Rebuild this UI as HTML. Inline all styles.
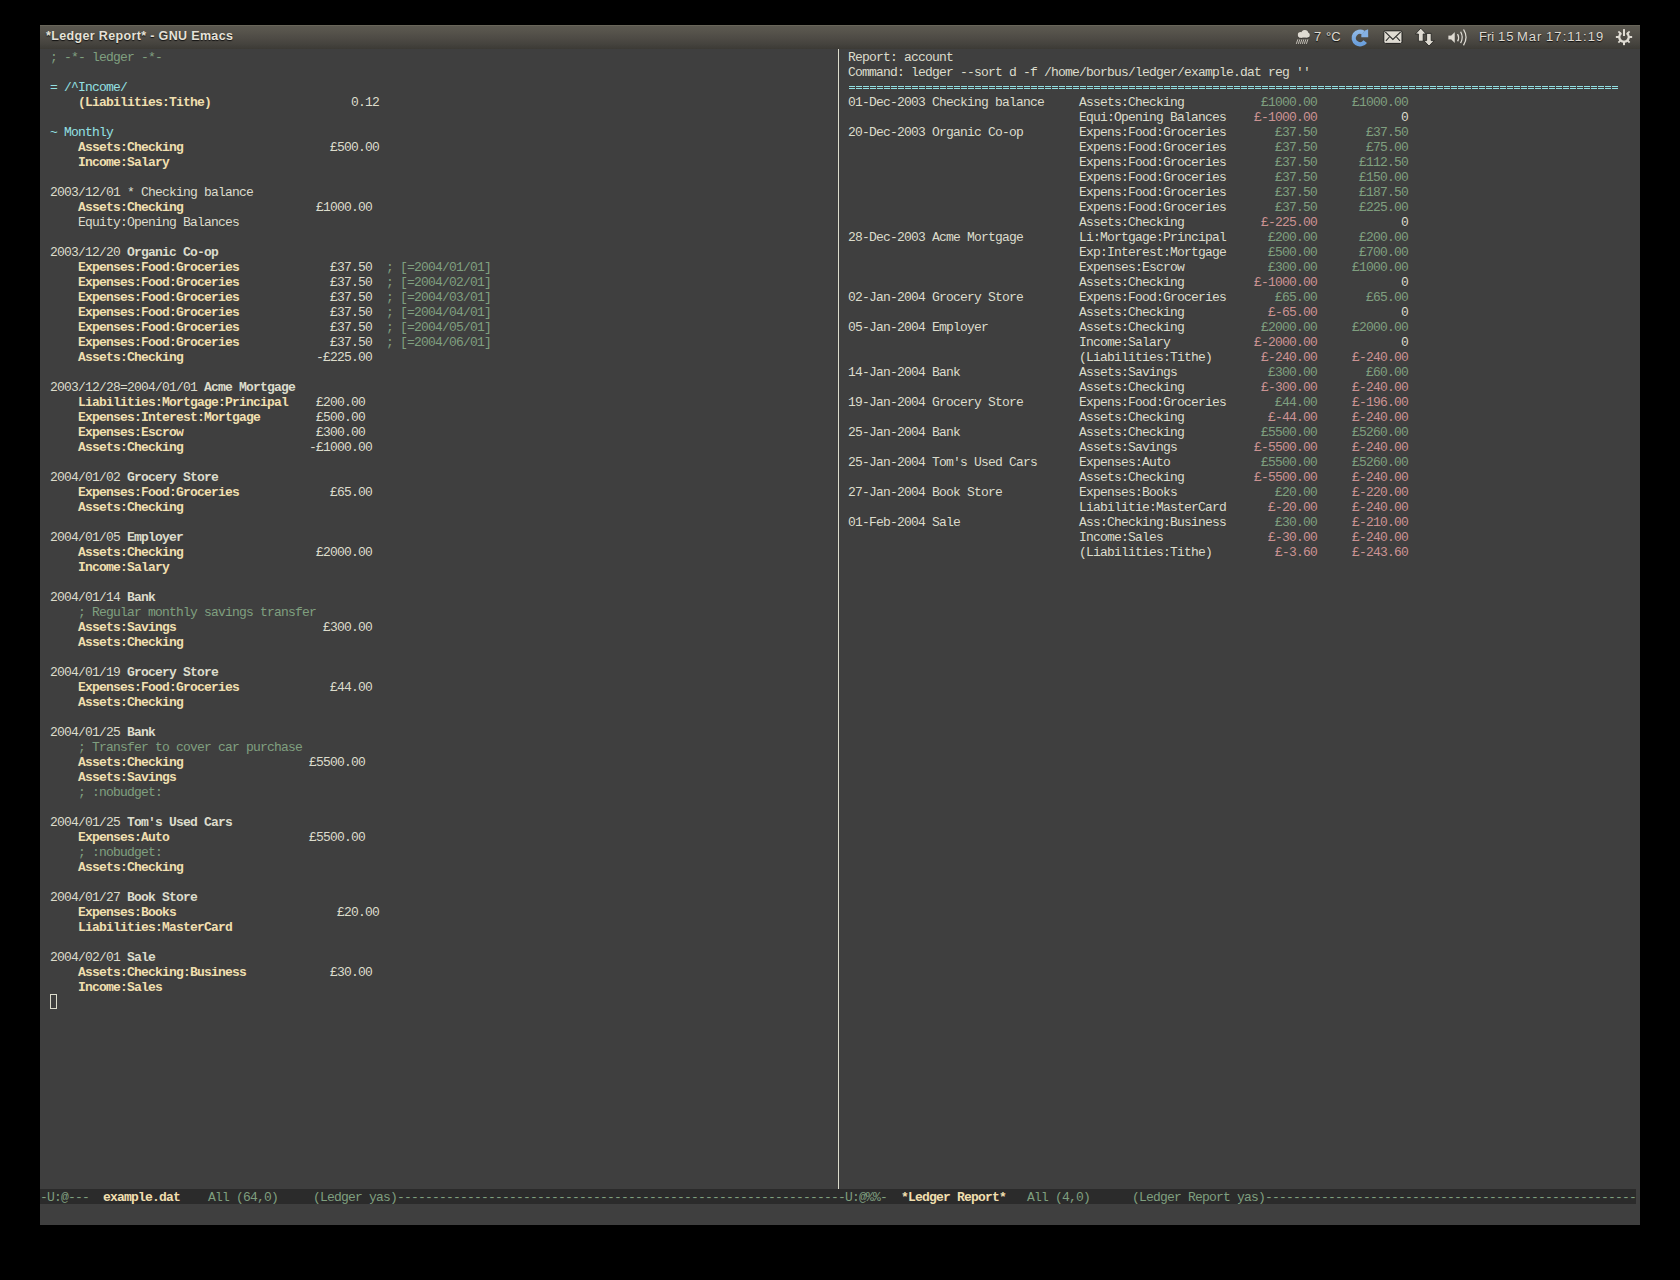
<!DOCTYPE html>
<html><head><meta charset="utf-8">
<style>
html,body{margin:0;padding:0;background:#000;width:1680px;height:1280px;overflow:hidden;}
#win{position:absolute;left:40px;top:25px;width:1600px;height:1200px;background:#3f3f3f;overflow:hidden;}
#title{position:absolute;left:40px;top:25px;width:1600px;height:24px;background:linear-gradient(#69665a 0px,#69665a 1px,#5b5850 1px,#57544c 6px,#4e4b45 13px,#45433e 19px,#3c3a35 24px);}
#title .t{position:absolute;left:6px;top:4px;font:bold 12.5px "Liberation Sans",sans-serif;letter-spacing:0.35px;color:#e6e2d8;text-shadow:0 1px 1px #111;white-space:pre;}
#title .st{position:absolute;top:4px;font:13px "Liberation Sans",sans-serif;color:#dfdbd2;text-shadow:0 1px 1px #111;white-space:pre;}
#txt span{position:absolute;white-space:pre;font-family:"Liberation Mono",monospace;font-size:13px;letter-spacing:-0.8px;line-height:15px;height:15px;}
.f{color:#dcdccc}
.c{color:#7f9f7f}
.y{color:#93e0e3}
.a{color:#f0dfaf;font-weight:bold}
.p{color:#dcdccc;font-weight:bold}
.g{color:#7f9f7f}
.r{color:#cc9393}
.eq{color:#93e0e3}
.mg{color:#7f9f7f}
.mb{color:#f0dfaf;font-weight:bold}
#sep{position:absolute;left:838px;top:49px;width:1px;height:1140px;background:#dcdccc;}
#ml{position:absolute;left:40px;top:1189px;width:1596px;height:15px;background:#2b2b2b;}
#cursor{position:absolute;left:50px;top:994px;width:7px;height:15px;border:1px solid #dcdccc;box-sizing:border-box;}
svg{position:absolute;overflow:visible}
#eqline{position:absolute;left:849px;top:86px;width:770px;height:3px;background:repeating-linear-gradient(90deg,#93e0e3 0px,#93e0e3 6px,transparent 6px,transparent 7px);-webkit-mask:linear-gradient(#000 0 1px,transparent 1px 2px,#000 2px 3px);mask:linear-gradient(#000 0 1px,transparent 1px 2px,#000 2px 3px);}
</style></head><body>
<div id="win"></div>
<div id="sep"></div>
<div id="ml"></div>
<div id="cursor"></div>
<div id="eqline"></div>
<div id="title"><span class="t">*Ledger Report* - GNU Emacs</span>
<span class="st" style="left:1274px">7</span>
<span class="st" style="left:1286px">°C</span>
<span class="st" style="left:1439px">Fri</span><span class="st" style="left:1458px;letter-spacing:1px">15</span><span class="st" style="left:1477px;letter-spacing:1px">Mar</span><span class="st" style="left:1506px;letter-spacing:1.1px">17:11:19</span>
</div>
<!-- cloud -->
<svg style="left:1294px;top:28px" width="18" height="18" viewBox="0 0 18 18">
<g fill="#1f1f1d" opacity="0.55" transform="translate(0 0.6)"><circle cx="6.6" cy="6.9" r="2.9"/><circle cx="10.8" cy="5.6" r="3.6"/><circle cx="13.3" cy="7.1" r="2.6"/><rect x="6.6" y="6.5" width="6.7" height="3.2"/></g>
<g fill="#dfdbd2"><circle cx="6.6" cy="6.9" r="2.8"/><circle cx="10.8" cy="5.6" r="3.5"/><circle cx="13.3" cy="7.1" r="2.5"/><rect x="6.6" y="6.5" width="6.7" height="3.1"/></g>
<g stroke="#cfcbc2" stroke-width="0.9">
<path d="M2.3 15.9 L3.9 11.3 M4.3 15.9 L5.9 11.3 M6.3 15.9 L7.9 11.3 M8.3 15.9 L9.9 11.3 M10.3 15.9 L11.9 11.3 M12.3 15.9 L13.9 11.3"/>
</g>
</svg>
<!-- refresh -->
<svg style="left:1350px;top:27px" width="22" height="22" viewBox="0 0 22 22">
<defs><linearGradient id="bl" x1="0" y1="0" x2="0" y2="1"><stop offset="0" stop-color="#8fb8e6"/><stop offset="1" stop-color="#6a9fdc"/></linearGradient></defs>
<path d="M13.4 5.6 A6.3 6.3 0 1 0 15.2 14.6" fill="none" stroke="url(#bl)" stroke-width="4.4"/>
<path d="M11.3 7.8 L15 3.6 L18.1 2.2 L18.2 10.2 L11.3 10.2 Z" fill="#84b0e3"/>
</svg>
<!-- mail -->
<svg style="left:1383px;top:30px" width="21" height="15" viewBox="0 0 21 15">
<rect x="0.8" y="0.8" width="18.2" height="12.6" rx="1.5" fill="#dfdbd2" stroke="#1e1e1c" stroke-width="1"/>
<path d="M2.2 1.9 L9.9 9.4 L17.7 1.9 M2.9 10.9 L6.4 7 M17 10.9 L13.5 7" fill="none" stroke="#2a2a28" stroke-width="1.1"/>
</svg>
<!-- network -->
<svg style="left:1414px;top:27px" width="22" height="20" viewBox="0 0 22 20">
<path d="M6.8 1.2 L12.2 7 L9.2 7 L9.2 14.2 L4.4 14.2 L4.4 7 L1.4 7 Z" fill="#dfdbd2" stroke="#1e1e1c" stroke-width="0.8"/>
<path d="M12.6 6.4 L17.2 6.4 L17.2 13.6 L20.2 13.6 L15 19 L9.8 13.6 L12.6 13.6 Z" fill="#dfdbd2" stroke="#1e1e1c" stroke-width="0.8"/>
</svg>
<!-- volume -->
<svg style="left:1446px;top:27px;filter:drop-shadow(0 0 0.7px #151513)" width="24" height="20" viewBox="0 0 24 20">
<path d="M2.3 8.4 L5.2 8.4 L8.8 4.9 L8.8 16.1 L5.2 12.6 L2.3 12.6 Z" fill="#dfdbd2"/>
<path d="M11.6 7 Q13.6 10.6 11.6 14.3" fill="none" stroke="#dfdbd2" stroke-width="1.4"/>
<path d="M14.6 4.6 Q17.9 10.4 14.6 16.1" fill="none" stroke="#dfdbd2" stroke-width="1.4"/>
<path d="M17.5 2.3 Q22.6 10.4 17.5 18.3" fill="none" stroke="#dfdbd2" stroke-width="1.4"/>
</svg>
<!-- power gear -->
<svg style="left:1614px;top:27px;filter:drop-shadow(0 0 0.7px #151513)" width="20" height="20" viewBox="0 0 20 20">
<g transform="translate(10 10)" fill="#dfdbd2">
<path d="M2.6 -4 A4.75 4.75 0 1 1 -2.6 -4" fill="none" stroke="#dfdbd2" stroke-width="2.4"/>
<rect x="-1" y="-7.9" width="2" height="6.9"/>
<g><rect x="-1" y="4.8" width="2" height="3.4"/></g>
<g transform="rotate(45)"><rect x="-1" y="4.8" width="2" height="3.2"/></g>
<g transform="rotate(90)"><rect x="-1" y="4.8" width="2" height="3.4"/></g>
<g transform="rotate(135)"><rect x="-1" y="4.8" width="2" height="3.2"/></g>
<g transform="rotate(-45)"><rect x="-1" y="4.8" width="2" height="3.2"/></g>
<g transform="rotate(-90)"><rect x="-1" y="4.8" width="2" height="3.4"/></g>
<g transform="rotate(-135)"><rect x="-1" y="4.8" width="2" height="3.2"/></g>
</g>
</svg>
<div id="txt">
<span class="c" style="left:50px;top:50px">; -*- ledger -*-</span>
<span class="y" style="left:50px;top:80px">= /^Income/</span>
<span class="a" style="left:78px;top:95px">(Liabilities:Tithe)</span>
<span class="f" style="left:351px;top:95px">0.12</span>
<span class="y" style="left:50px;top:125px">~ Monthly</span>
<span class="a" style="left:78px;top:140px">Assets:Checking</span>
<span class="f" style="left:330px;top:140px">£500.00</span>
<span class="a" style="left:78px;top:155px">Income:Salary</span>
<span class="f" style="left:50px;top:185px">2003/12/01 * Checking balance</span>
<span class="a" style="left:78px;top:200px">Assets:Checking</span>
<span class="f" style="left:316px;top:200px">£1000.00</span>
<span class="f" style="left:78px;top:215px">Equity:Opening Balances</span>
<span class="f" style="left:50px;top:245px">2003/12/20 </span>
<span class="p" style="left:127px;top:245px">Organic Co-op</span>
<span class="a" style="left:78px;top:260px">Expenses:Food:Groceries</span>
<span class="f" style="left:330px;top:260px">£37.50</span>
<span class="c" style="left:386px;top:260px">; [=2004/01/01]</span>
<span class="a" style="left:78px;top:275px">Expenses:Food:Groceries</span>
<span class="f" style="left:330px;top:275px">£37.50</span>
<span class="c" style="left:386px;top:275px">; [=2004/02/01]</span>
<span class="a" style="left:78px;top:290px">Expenses:Food:Groceries</span>
<span class="f" style="left:330px;top:290px">£37.50</span>
<span class="c" style="left:386px;top:290px">; [=2004/03/01]</span>
<span class="a" style="left:78px;top:305px">Expenses:Food:Groceries</span>
<span class="f" style="left:330px;top:305px">£37.50</span>
<span class="c" style="left:386px;top:305px">; [=2004/04/01]</span>
<span class="a" style="left:78px;top:320px">Expenses:Food:Groceries</span>
<span class="f" style="left:330px;top:320px">£37.50</span>
<span class="c" style="left:386px;top:320px">; [=2004/05/01]</span>
<span class="a" style="left:78px;top:335px">Expenses:Food:Groceries</span>
<span class="f" style="left:330px;top:335px">£37.50</span>
<span class="c" style="left:386px;top:335px">; [=2004/06/01]</span>
<span class="a" style="left:78px;top:350px">Assets:Checking</span>
<span class="f" style="left:316px;top:350px">-£225.00</span>
<span class="f" style="left:50px;top:380px">2003/12/28=2004/01/01 </span>
<span class="p" style="left:204px;top:380px">Acme Mortgage</span>
<span class="a" style="left:78px;top:395px">Liabilities:Mortgage:Principal</span>
<span class="f" style="left:316px;top:395px">£200.00</span>
<span class="a" style="left:78px;top:410px">Expenses:Interest:Mortgage</span>
<span class="f" style="left:316px;top:410px">£500.00</span>
<span class="a" style="left:78px;top:425px">Expenses:Escrow</span>
<span class="f" style="left:316px;top:425px">£300.00</span>
<span class="a" style="left:78px;top:440px">Assets:Checking</span>
<span class="f" style="left:309px;top:440px">-£1000.00</span>
<span class="f" style="left:50px;top:470px">2004/01/02 </span>
<span class="p" style="left:127px;top:470px">Grocery Store</span>
<span class="a" style="left:78px;top:485px">Expenses:Food:Groceries</span>
<span class="f" style="left:330px;top:485px">£65.00</span>
<span class="a" style="left:78px;top:500px">Assets:Checking</span>
<span class="f" style="left:50px;top:530px">2004/01/05 </span>
<span class="p" style="left:127px;top:530px">Employer</span>
<span class="a" style="left:78px;top:545px">Assets:Checking</span>
<span class="f" style="left:316px;top:545px">£2000.00</span>
<span class="a" style="left:78px;top:560px">Income:Salary</span>
<span class="f" style="left:50px;top:590px">2004/01/14 </span>
<span class="p" style="left:127px;top:590px">Bank</span>
<span class="c" style="left:78px;top:605px">; Regular monthly savings transfer</span>
<span class="a" style="left:78px;top:620px">Assets:Savings</span>
<span class="f" style="left:323px;top:620px">£300.00</span>
<span class="a" style="left:78px;top:635px">Assets:Checking</span>
<span class="f" style="left:50px;top:665px">2004/01/19 </span>
<span class="p" style="left:127px;top:665px">Grocery Store</span>
<span class="a" style="left:78px;top:680px">Expenses:Food:Groceries</span>
<span class="f" style="left:330px;top:680px">£44.00</span>
<span class="a" style="left:78px;top:695px">Assets:Checking</span>
<span class="f" style="left:50px;top:725px">2004/01/25 </span>
<span class="p" style="left:127px;top:725px">Bank</span>
<span class="c" style="left:78px;top:740px">; Transfer to cover car purchase</span>
<span class="a" style="left:78px;top:755px">Assets:Checking</span>
<span class="f" style="left:309px;top:755px">£5500.00</span>
<span class="a" style="left:78px;top:770px">Assets:Savings</span>
<span class="c" style="left:78px;top:785px">; :nobudget:</span>
<span class="f" style="left:50px;top:815px">2004/01/25 </span>
<span class="p" style="left:127px;top:815px">Tom&#x27;s Used Cars</span>
<span class="a" style="left:78px;top:830px">Expenses:Auto</span>
<span class="f" style="left:309px;top:830px">£5500.00</span>
<span class="c" style="left:78px;top:845px">; :nobudget:</span>
<span class="a" style="left:78px;top:860px">Assets:Checking</span>
<span class="f" style="left:50px;top:890px">2004/01/27 </span>
<span class="p" style="left:127px;top:890px">Book Store</span>
<span class="a" style="left:78px;top:905px">Expenses:Books</span>
<span class="f" style="left:337px;top:905px">£20.00</span>
<span class="a" style="left:78px;top:920px">Liabilities:MasterCard</span>
<span class="f" style="left:50px;top:950px">2004/02/01 </span>
<span class="p" style="left:127px;top:950px">Sale</span>
<span class="a" style="left:78px;top:965px">Assets:Checking:Business</span>
<span class="f" style="left:330px;top:965px">£30.00</span>
<span class="a" style="left:78px;top:980px">Income:Sales</span>
<span class="f" style="left:848px;top:50px">Report: account</span>
<span class="f" style="left:848px;top:65px">Command: ledger --sort d -f /home/borbus/ledger/example.dat reg &#x27;&#x27;</span>
<span class="f" style="left:848px;top:95px">01-Dec-2003 Checking balance</span>
<span class="f" style="left:1079px;top:95px">Assets:Checking</span>
<span class="g" style="left:1261px;top:95px">£1000.00</span>
<span class="g" style="left:1352px;top:95px">£1000.00</span>
<span class="f" style="left:1079px;top:110px">Equi:Opening Balances</span>
<span class="r" style="left:1254px;top:110px">£-1000.00</span>
<span class="f" style="left:1401px;top:110px">0</span>
<span class="f" style="left:848px;top:125px">20-Dec-2003 Organic Co-op</span>
<span class="f" style="left:1079px;top:125px">Expens:Food:Groceries</span>
<span class="g" style="left:1275px;top:125px">£37.50</span>
<span class="g" style="left:1366px;top:125px">£37.50</span>
<span class="f" style="left:1079px;top:140px">Expens:Food:Groceries</span>
<span class="g" style="left:1275px;top:140px">£37.50</span>
<span class="g" style="left:1366px;top:140px">£75.00</span>
<span class="f" style="left:1079px;top:155px">Expens:Food:Groceries</span>
<span class="g" style="left:1275px;top:155px">£37.50</span>
<span class="g" style="left:1359px;top:155px">£112.50</span>
<span class="f" style="left:1079px;top:170px">Expens:Food:Groceries</span>
<span class="g" style="left:1275px;top:170px">£37.50</span>
<span class="g" style="left:1359px;top:170px">£150.00</span>
<span class="f" style="left:1079px;top:185px">Expens:Food:Groceries</span>
<span class="g" style="left:1275px;top:185px">£37.50</span>
<span class="g" style="left:1359px;top:185px">£187.50</span>
<span class="f" style="left:1079px;top:200px">Expens:Food:Groceries</span>
<span class="g" style="left:1275px;top:200px">£37.50</span>
<span class="g" style="left:1359px;top:200px">£225.00</span>
<span class="f" style="left:1079px;top:215px">Assets:Checking</span>
<span class="r" style="left:1261px;top:215px">£-225.00</span>
<span class="f" style="left:1401px;top:215px">0</span>
<span class="f" style="left:848px;top:230px">28-Dec-2003 Acme Mortgage</span>
<span class="f" style="left:1079px;top:230px">Li:Mortgage:Principal</span>
<span class="g" style="left:1268px;top:230px">£200.00</span>
<span class="g" style="left:1359px;top:230px">£200.00</span>
<span class="f" style="left:1079px;top:245px">Exp:Interest:Mortgage</span>
<span class="g" style="left:1268px;top:245px">£500.00</span>
<span class="g" style="left:1359px;top:245px">£700.00</span>
<span class="f" style="left:1079px;top:260px">Expenses:Escrow</span>
<span class="g" style="left:1268px;top:260px">£300.00</span>
<span class="g" style="left:1352px;top:260px">£1000.00</span>
<span class="f" style="left:1079px;top:275px">Assets:Checking</span>
<span class="r" style="left:1254px;top:275px">£-1000.00</span>
<span class="f" style="left:1401px;top:275px">0</span>
<span class="f" style="left:848px;top:290px">02-Jan-2004 Grocery Store</span>
<span class="f" style="left:1079px;top:290px">Expens:Food:Groceries</span>
<span class="g" style="left:1275px;top:290px">£65.00</span>
<span class="g" style="left:1366px;top:290px">£65.00</span>
<span class="f" style="left:1079px;top:305px">Assets:Checking</span>
<span class="r" style="left:1268px;top:305px">£-65.00</span>
<span class="f" style="left:1401px;top:305px">0</span>
<span class="f" style="left:848px;top:320px">05-Jan-2004 Employer</span>
<span class="f" style="left:1079px;top:320px">Assets:Checking</span>
<span class="g" style="left:1261px;top:320px">£2000.00</span>
<span class="g" style="left:1352px;top:320px">£2000.00</span>
<span class="f" style="left:1079px;top:335px">Income:Salary</span>
<span class="r" style="left:1254px;top:335px">£-2000.00</span>
<span class="f" style="left:1401px;top:335px">0</span>
<span class="f" style="left:1079px;top:350px">(Liabilities:Tithe)</span>
<span class="r" style="left:1261px;top:350px">£-240.00</span>
<span class="r" style="left:1352px;top:350px">£-240.00</span>
<span class="f" style="left:848px;top:365px">14-Jan-2004 Bank</span>
<span class="f" style="left:1079px;top:365px">Assets:Savings</span>
<span class="g" style="left:1268px;top:365px">£300.00</span>
<span class="g" style="left:1366px;top:365px">£60.00</span>
<span class="f" style="left:1079px;top:380px">Assets:Checking</span>
<span class="r" style="left:1261px;top:380px">£-300.00</span>
<span class="r" style="left:1352px;top:380px">£-240.00</span>
<span class="f" style="left:848px;top:395px">19-Jan-2004 Grocery Store</span>
<span class="f" style="left:1079px;top:395px">Expens:Food:Groceries</span>
<span class="g" style="left:1275px;top:395px">£44.00</span>
<span class="r" style="left:1352px;top:395px">£-196.00</span>
<span class="f" style="left:1079px;top:410px">Assets:Checking</span>
<span class="r" style="left:1268px;top:410px">£-44.00</span>
<span class="r" style="left:1352px;top:410px">£-240.00</span>
<span class="f" style="left:848px;top:425px">25-Jan-2004 Bank</span>
<span class="f" style="left:1079px;top:425px">Assets:Checking</span>
<span class="g" style="left:1261px;top:425px">£5500.00</span>
<span class="g" style="left:1352px;top:425px">£5260.00</span>
<span class="f" style="left:1079px;top:440px">Assets:Savings</span>
<span class="r" style="left:1254px;top:440px">£-5500.00</span>
<span class="r" style="left:1352px;top:440px">£-240.00</span>
<span class="f" style="left:848px;top:455px">25-Jan-2004 Tom&#x27;s Used Cars</span>
<span class="f" style="left:1079px;top:455px">Expenses:Auto</span>
<span class="g" style="left:1261px;top:455px">£5500.00</span>
<span class="g" style="left:1352px;top:455px">£5260.00</span>
<span class="f" style="left:1079px;top:470px">Assets:Checking</span>
<span class="r" style="left:1254px;top:470px">£-5500.00</span>
<span class="r" style="left:1352px;top:470px">£-240.00</span>
<span class="f" style="left:848px;top:485px">27-Jan-2004 Book Store</span>
<span class="f" style="left:1079px;top:485px">Expenses:Books</span>
<span class="g" style="left:1275px;top:485px">£20.00</span>
<span class="r" style="left:1352px;top:485px">£-220.00</span>
<span class="f" style="left:1079px;top:500px">Liabilitie:MasterCard</span>
<span class="r" style="left:1268px;top:500px">£-20.00</span>
<span class="r" style="left:1352px;top:500px">£-240.00</span>
<span class="f" style="left:848px;top:515px">01-Feb-2004 Sale</span>
<span class="f" style="left:1079px;top:515px">Ass:Checking:Business</span>
<span class="g" style="left:1275px;top:515px">£30.00</span>
<span class="r" style="left:1352px;top:515px">£-210.00</span>
<span class="f" style="left:1079px;top:530px">Income:Sales</span>
<span class="r" style="left:1268px;top:530px">£-30.00</span>
<span class="r" style="left:1352px;top:530px">£-240.00</span>
<span class="f" style="left:1079px;top:545px">(Liabilities:Tithe)</span>
<span class="r" style="left:1275px;top:545px">£-3.60</span>
<span class="r" style="left:1352px;top:545px">£-243.60</span>
<span class="mg" style="left:40px;top:1191px;line-height:14px;height:14px">-U:@---</span>
<span class="mb" style="left:103px;top:1191px;line-height:14px;height:14px">example.dat</span>
<span class="mg" style="left:208px;top:1191px;line-height:14px;height:14px">All (64,0)</span>
<span class="mg" style="left:313px;top:1191px;line-height:14px;height:14px">(Ledger yas)</span>
<span class="mg" style="left:397px;top:1191px;line-height:14px;height:14px">---------------------------------------------------------------</span>
<span class="mg" style="left:838px;top:1191px;line-height:14px;height:14px">-U:@%%-</span>
<span class="mb" style="left:901px;top:1191px;line-height:14px;height:14px">*Ledger Report*</span>
<span class="mg" style="left:1027px;top:1191px;line-height:14px;height:14px">All (4,0)</span>
<span class="mg" style="left:1132px;top:1191px;line-height:14px;height:14px">(Ledger Report yas)</span>
<span class="mg" style="left:1265px;top:1191px;line-height:14px;height:14px">-----------------------------------------------------</span>
</div>
</body></html>
